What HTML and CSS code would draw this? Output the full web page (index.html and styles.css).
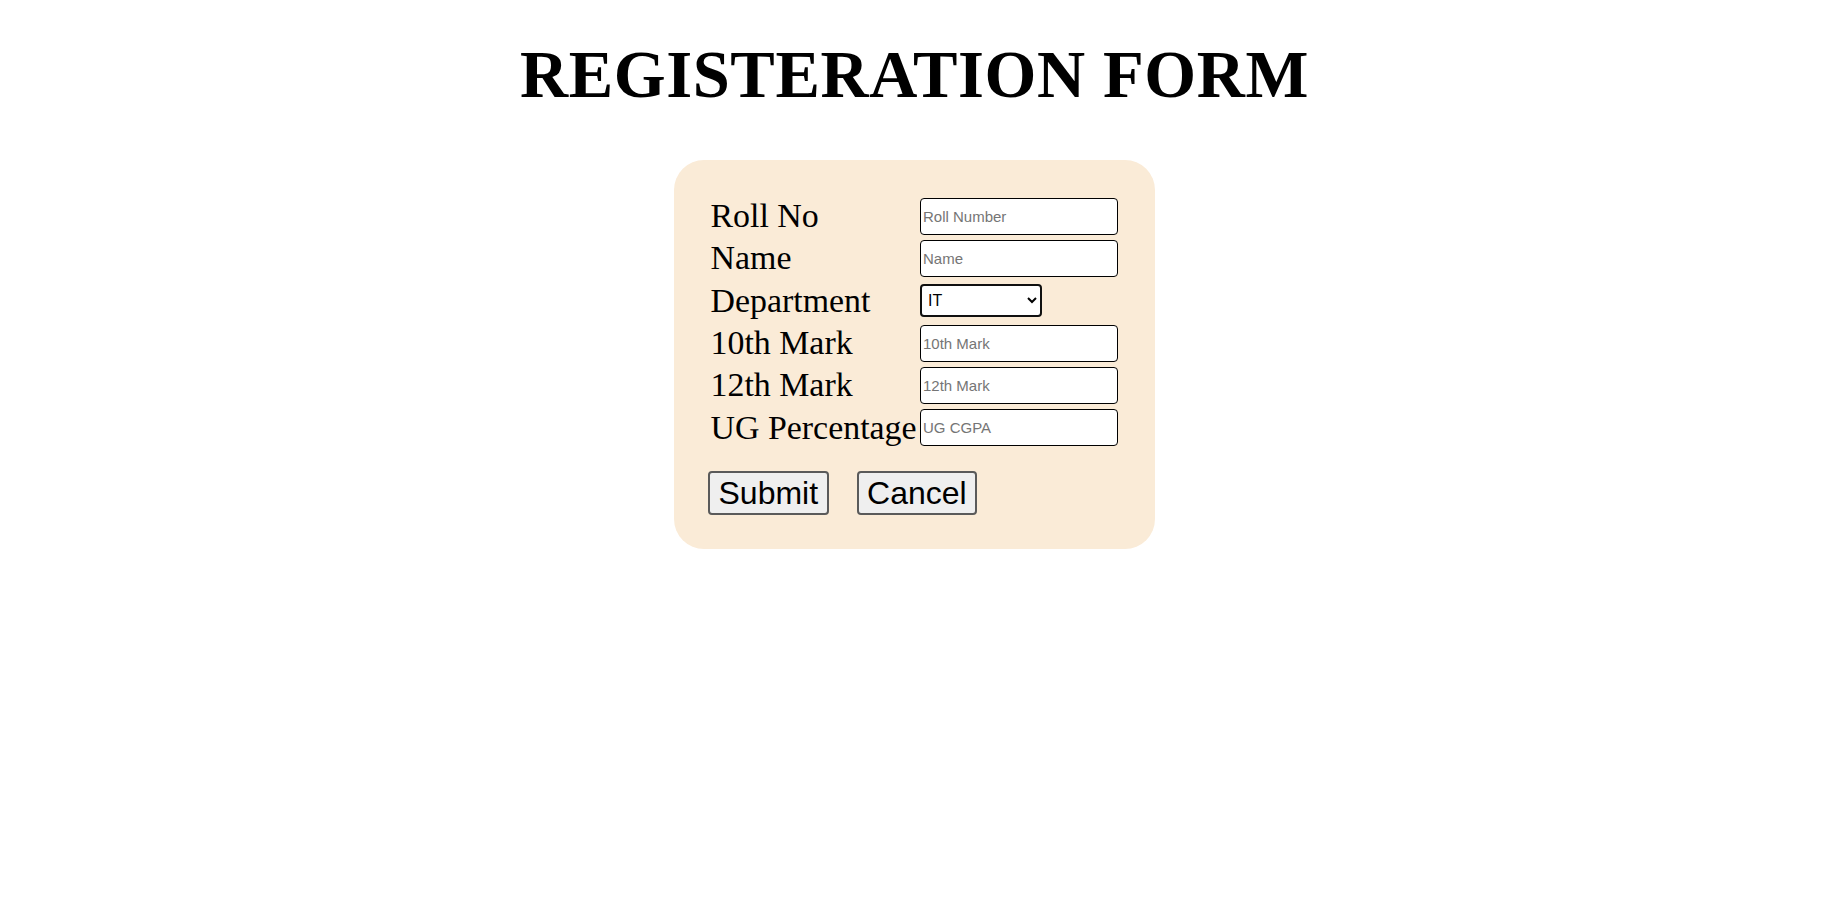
FILE: index.html
```html
<!DOCTYPE html>
<html>
<head>
<meta charset="utf-8">
<title>Registration Form</title>
<link rel="stylesheet" href="styles.css">
</head>
<body>
<h1 class="title">REGISTERATION FORM</h1>
<form class="card">
  <div class="fields">
    <label class="lbl">Roll No</label>
    <input class="txt" type="text" placeholder="Roll Number">
    <label class="lbl">Name</label>
    <input class="txt" type="text" placeholder="Name">
    <label class="lbl">Department</label>
    <div><select class="sel"><option>IT</option><option>CSE</option><option>ECE</option></select></div>
    <label class="lbl">10th Mark</label>
    <input class="txt" type="text" placeholder="10th Mark">
    <label class="lbl">12th Mark</label>
    <input class="txt" type="text" placeholder="12th Mark">
    <label class="lbl">UG Percentage</label>
    <input class="txt" type="text" placeholder="UG CGPA">
  </div>
  <div class="actions">
    <button class="btn" type="button">Submit</button>
    <button class="btn" type="button">Cancel</button>
  </div>
</form>
</body>
</html>
```

FILE: styles.css
```css
html, body {
  margin: 0;
  background: #ffffff;
}
body {
  padding-left: 3px;
  font-family: "Liberation Serif", "Times New Roman", serif;
  color: #000;
}
.title {
  margin: 37px 0 46.5px;
  text-align: center;
  font-family: "Liberation Serif", "Times New Roman", serif;
  font-weight: bold;
  font-size: 66.67px;
  letter-spacing: 0.6px;
  line-height: normal;
}
.card {
  box-sizing: border-box;
  width: 481px;
  margin: 0 auto;
  padding: 37.6px 37px 34px 36.5px;
  background: #faebd7;
  border-radius: 30px;
}
.fields {
  display: grid;
  grid-template-columns: 209.5px 198px;
  grid-auto-rows: 38.3px;
  row-gap: 4px;
  align-items: center;
}
.lbl {
  font-size: 33.9px;
  line-height: 38.3px;
  white-space: nowrap;
}
.txt {
  box-sizing: border-box;
  width: 198px;
  height: 37px;
  margin: 0;
  padding: 0 2px;
  border: 1px solid #000;
  border-radius: 4px;
  background: #fff;
  font-family: "Liberation Sans", Arial, sans-serif;
  font-size: 15px;
  color: #000;
}
.txt::placeholder {
  color: #757575;
}
.sel {
  box-sizing: border-box;
  width: 122px;
  height: 33px;
  margin: 0;
  padding: 0 2px;
  border: 2px solid #101010;
  border-radius: 4px;
  background: #fff;
  font-family: "Liberation Sans", Arial, sans-serif;
  font-size: 16px;
  color: #000;
}
.actions {
  display: flex;
  gap: 28px;
  margin-top: 24.3px;
  margin-left: -2.5px;
}
.btn {
  margin: 0;
  padding: 1.4px 8.5px;
  border: 2px solid #5a5a5a;
  border-radius: 4px;
  background: #efefef;
  font-family: "Liberation Sans", Arial, sans-serif;
  font-size: 32px;
  line-height: normal;
  color: #000;
}
```
